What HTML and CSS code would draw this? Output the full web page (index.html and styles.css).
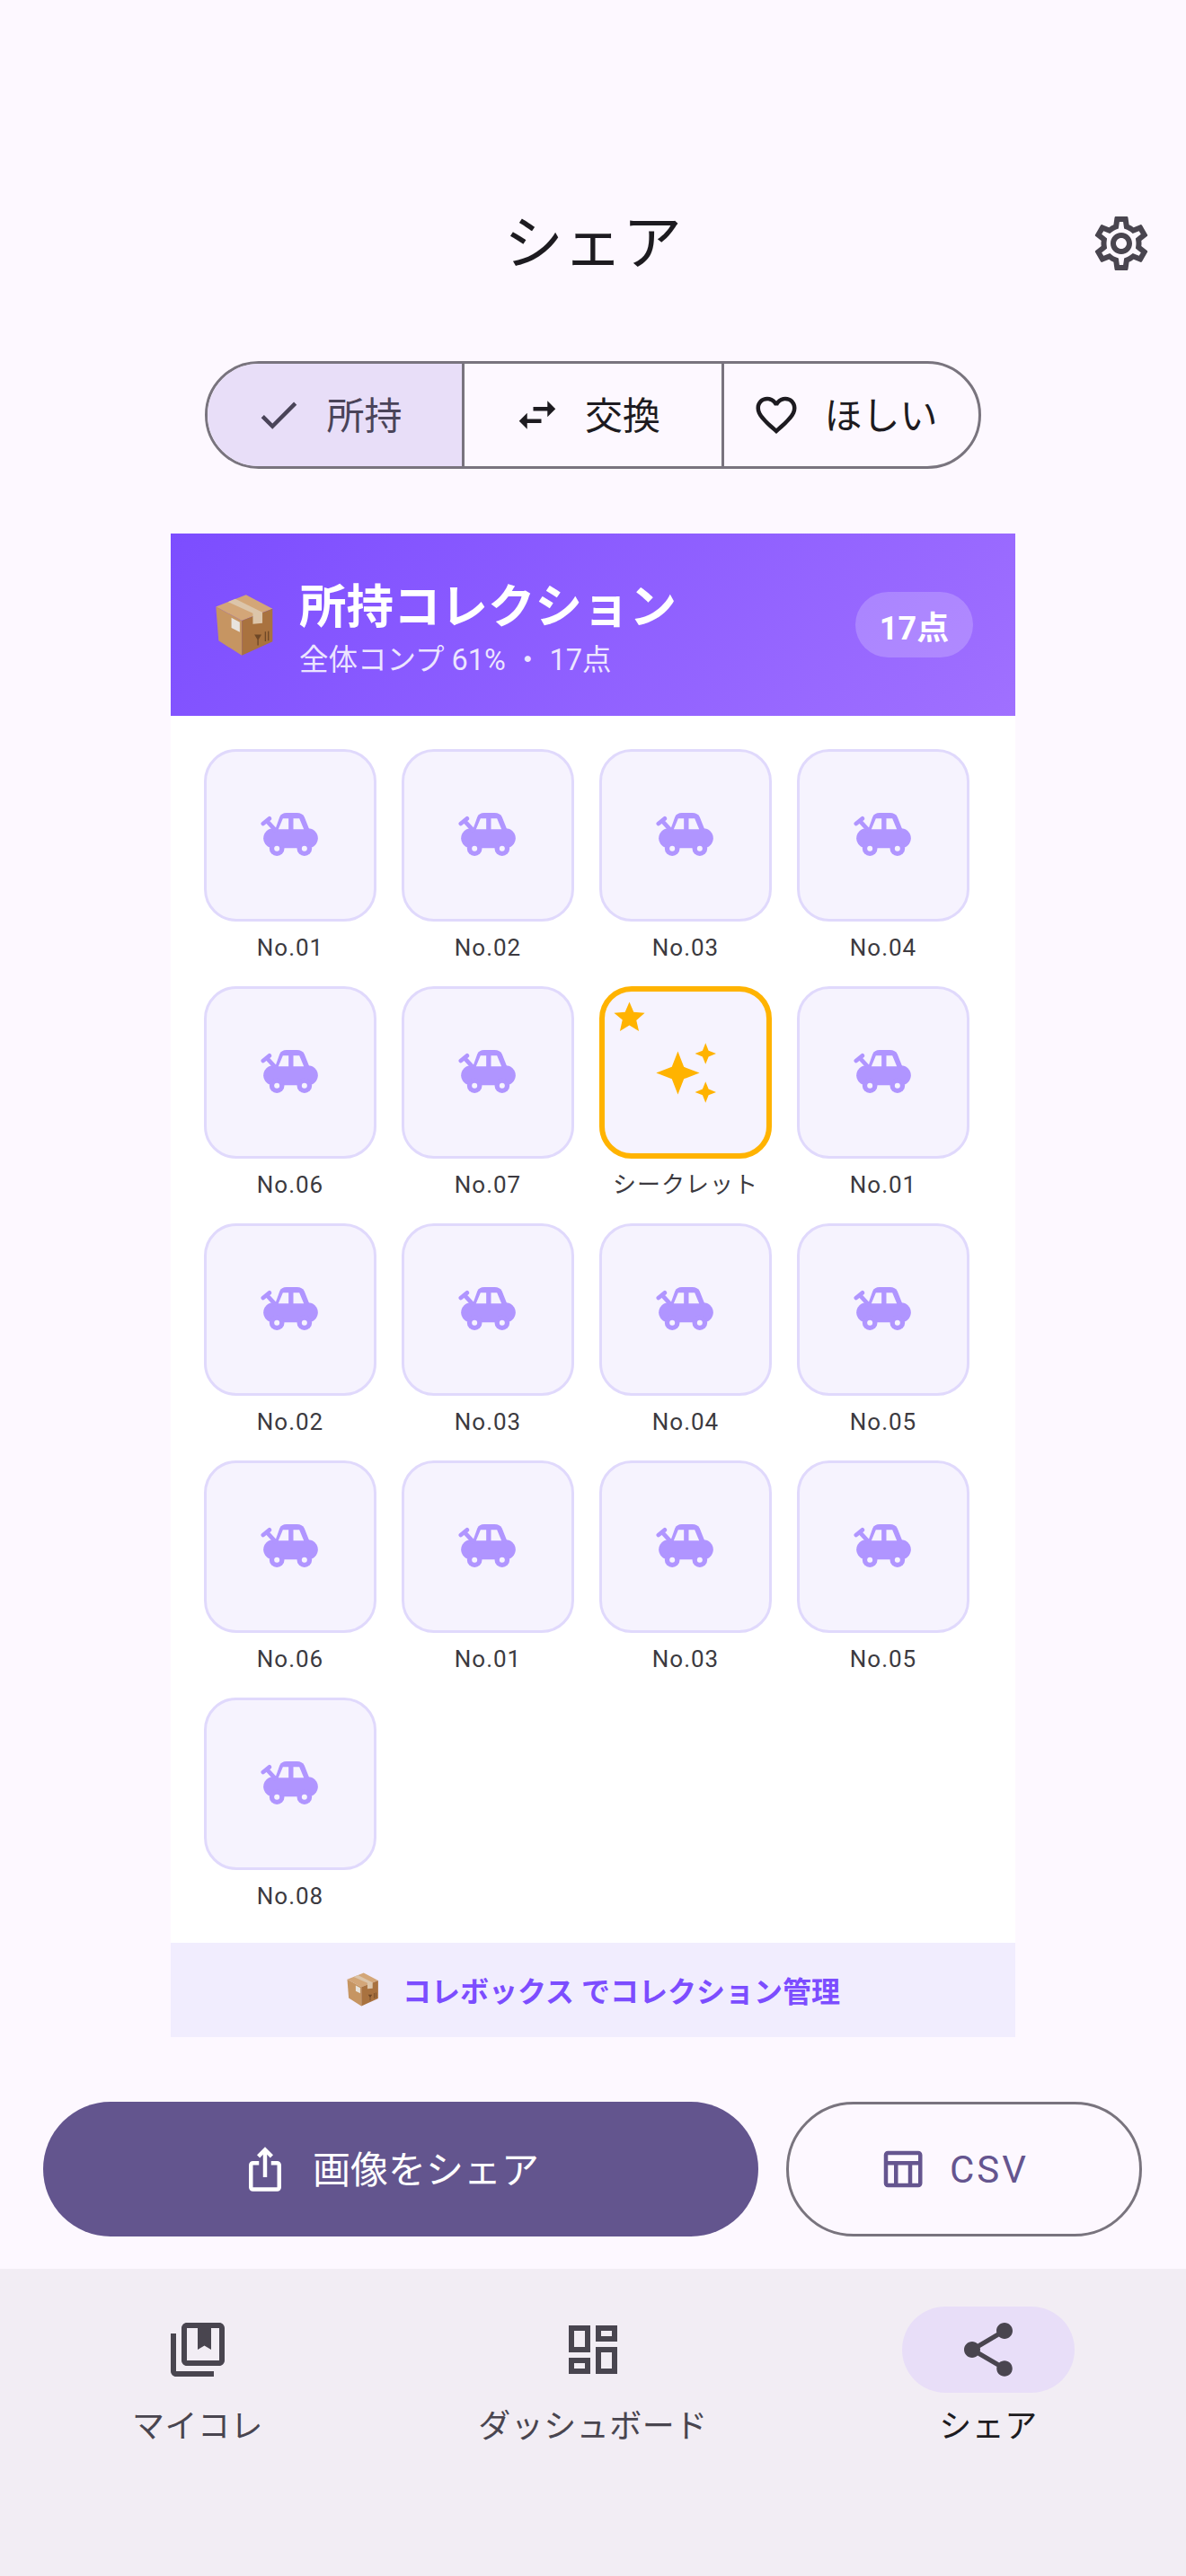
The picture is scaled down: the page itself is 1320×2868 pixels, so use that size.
FILE: index.html
```html
<!DOCTYPE html>
<html lang="ja">
<head>
    <meta charset="UTF-8">
    <meta name="viewport" content="width=device-width, initial-scale=1.0">
    <title>シェア</title>
    <link rel="stylesheet" href="styles.css">
</head>
<body>
  <svg class="defs" width="0" height="0">
    <symbol id="car" viewBox="59 78 200 150">
      <path fill="currentColor" d="M105 140L122 92Q128 78 145 78H180Q198 78 205 92L224 140Z"/>
      <rect fill="currentColor" x="68" y="130" width="182" height="66" rx="33"/>
      <circle fill="currentColor" cx="113" cy="197" r="25"/>
      <circle fill="currentColor" cx="205" cy="197" r="25"/>
      <path fill="none" stroke="currentColor" stroke-width="14" stroke-linecap="round" d="M67 114L88 97M84 110L108 136"/>
      <path fill="#f6f3fe" d="M118 133l15-36h19v36zM168 97h20l15 36h-35z"/>
      <circle fill="#f6f3fe" cx="113" cy="197" r="9"/>
      <circle fill="#f6f3fe" cx="205" cy="197" r="9"/>
    </symbol>
    <symbol id="box" viewBox="147 215 196 210">
      <path fill="#d3a678" d="M151 258l101-40 89 47-103 40z"/>
      <path fill="#c69562" d="M151 258l87 47v117l-78-50z"/>
      <path fill="#a9723f" d="M238 305l103-40v110l-103 47z"/>
      <path fill="#dcc5aa" d="M191 242l25-10 91 45v36l-32 3v-36z"/>
      <path fill="#e8e4de" d="M203 295l28 15v33l-28-14z"/>
      <path fill="#6e4726" d="M280 352h24l-10 16v20h-4v-20zM315 342h4v32h-4zM325 340h4v32h-4z"/>
    </symbol>
  </svg>

  <div class="appbar">
    <span></span>
    <h1>シェア</h1>
    <svg class="gear" viewBox="0 0 24 24"><path fill="currentColor" d="M19.43 12.98c.04-.32.07-.64.07-.98 0-.34-.03-.66-.07-.98l2.11-1.65c.19-.15.24-.42.12-.64l-2-3.46c-.09-.16-.26-.25-.44-.25-.06 0-.12.01-.17.03l-2.49 1c-.52-.4-1.08-.73-1.69-.98l-.38-2.65C14.46 2.18 14.25 2 14 2h-4c-.25 0-.46.18-.49.42l-.38 2.65c-.61.25-1.17.59-1.69.98l-2.49-1c-.06-.02-.12-.03-.18-.03-.17 0-.34.09-.43.25l-2 3.46c-.13.22-.07.49.12.64l2.11 1.65c-.04.32-.07.65-.07.98 0 .33.03.66.07.98l-2.11 1.65c-.19.15-.24.42-.12.64l2 3.46c.09.16.26.25.44.25.06 0 .12-.01.17-.03l2.49-1c.52.4 1.08.73 1.69.98l.38 2.65c.03.24.24.42.49.42h4c.25 0 .46-.18.49-.42l.38-2.65c.61-.25 1.17-.59 1.69-.98l2.49 1c.06.02.12.03.18.03.17 0 .34-.09.43-.25l2-3.46c.12-.22.07-.49-.12-.64l-2.11-1.65zm-1.98-1.71c.04.31.05.52.05.73 0 .21-.02.43-.05.73l-.14 1.13.89.7 1.08.84-.7 1.21-1.27-.51-1.04-.42-.9.68c-.43.32-.84.56-1.25.73l-1.06.43-.16 1.13-.2 1.35h-1.4l-.19-1.35-.16-1.13-1.06-.43c-.43-.18-.83-.41-1.23-.71l-.91-.7-1.06.43-1.27.51-.7-1.21 1.08-.84.89-.7-.14-1.13c-.03-.31-.05-.54-.05-.74s.02-.43.05-.73l.14-1.13-.89-.7-1.08-.84.7-1.21 1.27.51 1.04.42.9-.68c.43-.32.84-.56 1.25-.73l1.06-.43.16-1.13.2-1.35h1.39l.19 1.35.16 1.13 1.06.43c.43.18.83.41 1.23.71l.91.7 1.06-.43 1.27-.51.7 1.21-1.07.85-.89.7.14 1.13zM12 8c-2.21 0-4 1.79-4 4s1.79 4 4 4 4-1.79 4-4-1.79-4-4-4zm0 6c-1.1 0-2-.9-2-2s.9-2 2-2 2 .9 2 2-.9 2-2 2z"/></svg>
  </div>

  <div class="segments">
    <div class="segment selected">
      <svg class="icon" viewBox="0 0 24 24"><path fill="currentColor" d="M9 16.17L4.83 12l-1.41 1.41L9 19 21 7l-1.41-1.41z"/></svg>
      <span>所持</span>
    </div>
    <div class="segment">
      <svg class="icon" viewBox="0 0 24 24"><path fill="currentColor" d="M6.99 11L3 15l3.99 4v-3H14v-2H6.99v-3zM21 9l-3.99-4v3H10v2h7.01v3L21 9z"/></svg>
      <span>交換</span>
    </div>
    <div class="segment">
      <svg class="icon" viewBox="0 0 24 24"><path fill="currentColor" d="M16.5 3c-1.74 0-3.41.81-4.5 2.09C10.91 3.81 9.24 3 7.5 3 4.42 3 2 5.42 2 8.5c0 3.78 3.4 6.86 8.55 11.54L12 21.35l1.45-1.32C18.6 15.36 22 12.28 22 8.5 22 5.42 19.58 3 16.5 3zm-4.4 15.55l-.1.1-.1-.1C7.14 14.24 4 11.39 4 8.5 4 6.5 5.5 5 7.5 5c1.54 0 3.04.99 3.57 2.36h1.87C13.46 5.99 14.96 5 16.5 5c2 0 3.5 1.5 3.5 3.5 0 2.89-3.14 5.74-7.9 10.05z"/></svg>
      <span>ほしい</span>
    </div>
  </div>

  <div class="card">
    <div class="card-head">
      <svg class="box-big"><use href="#box"/></svg>
      <div class="card-titles">
        <div class="card-title">所持コレクション</div>
        <div class="card-sub">全体コンプ 61% ・ 17点</div>
      </div>
      <div class="badge">17点</div>
    </div>

    <div class="grid">
      <div class="cell"><div class="tile"><svg class="car"><use href="#car"/></svg></div><div class="label">No.01</div></div>
      <div class="cell"><div class="tile"><svg class="car"><use href="#car"/></svg></div><div class="label">No.02</div></div>
      <div class="cell"><div class="tile"><svg class="car"><use href="#car"/></svg></div><div class="label">No.03</div></div>
      <div class="cell"><div class="tile"><svg class="car"><use href="#car"/></svg></div><div class="label">No.04</div></div>

      <div class="cell"><div class="tile"><svg class="car"><use href="#car"/></svg></div><div class="label">No.06</div></div>
      <div class="cell"><div class="tile"><svg class="car"><use href="#car"/></svg></div><div class="label">No.07</div></div>
      <div class="cell">
        <div class="tile secret">
          <svg class="corner-star" viewBox="0 0 24 24"><path fill="currentColor" d="M12 17.27L18.18 21l-1.64-6.96L22 9.24l-7.19-.61L12 2 9.19 8.63 2 9.24l5.46 4.58L5.82 21z"/></svg>
          <svg class="sparkle" viewBox="265 243 200 200"><path fill="currentColor" d="M338 271l20 52 52 20-52 20-20 52-20-52-52-20 52-20zM430 244l10 25 25 10-25 10-10 25-10-25-25-10 25-10zM430 372l10 25 25 10-25 10-10 25-10-25-25-10 25-10z"/></svg>
        </div>
        <div class="label">シークレット</div>
      </div>
      <div class="cell"><div class="tile"><svg class="car"><use href="#car"/></svg></div><div class="label">No.01</div></div>

      <div class="cell"><div class="tile"><svg class="car"><use href="#car"/></svg></div><div class="label">No.02</div></div>
      <div class="cell"><div class="tile"><svg class="car"><use href="#car"/></svg></div><div class="label">No.03</div></div>
      <div class="cell"><div class="tile"><svg class="car"><use href="#car"/></svg></div><div class="label">No.04</div></div>
      <div class="cell"><div class="tile"><svg class="car"><use href="#car"/></svg></div><div class="label">No.05</div></div>

      <div class="cell"><div class="tile"><svg class="car"><use href="#car"/></svg></div><div class="label">No.06</div></div>
      <div class="cell"><div class="tile"><svg class="car"><use href="#car"/></svg></div><div class="label">No.01</div></div>
      <div class="cell"><div class="tile"><svg class="car"><use href="#car"/></svg></div><div class="label">No.03</div></div>
      <div class="cell"><div class="tile"><svg class="car"><use href="#car"/></svg></div><div class="label">No.05</div></div>

      <div class="cell"><div class="tile"><svg class="car"><use href="#car"/></svg></div><div class="label">No.08</div></div>
    </div>

    <div class="card-foot">
      <svg class="box-small"><use href="#box"/></svg>
      <span>コレボックス でコレクション管理</span>
    </div>
  </div>

  <div class="actions">
    <div class="btn btn-primary">
      <svg class="icon" viewBox="0 0 24 24"><path fill="currentColor" d="M16 5l-1.42 1.42-1.59-1.59V16h-1.98V4.83L9.42 6.42 8 5l4-4 4 4zm4 5v11c0 1.1-.9 2-2 2H6c-1.11 0-2-.9-2-2V10c0-1.11.89-2 2-2h3v2H6v11h12V10h-3V8h3c1.1 0 2 .89 2 2z"/></svg>
      <span>画像をシェア</span>
    </div>
    <div class="btn btn-outline">
      <svg class="icon" viewBox="0 0 24 24"><path fill="currentColor" d="M20 3H5c-1.1 0-2 .9-2 2v14c0 1.1.9 2 2 2h15c1.1 0 2-.9 2-2V5c0-1.1-.9-2-2-2zm0 2v3H5V5h15zm-5 14h-5v-9h5v9zM5 10h3v9H5v-9zm12 9v-9h3v9h-3z"/></svg>
      <span>CSV</span>
    </div>
  </div>

  <nav class="nav">
    <div class="nav-item">
      <div class="indicator">
        <svg class="nav-icon" viewBox="0 0 24 24"><path fill="currentColor" d="M4 6H2v14c0 1.1.9 2 2 2h14v-2H4V6zM20 2H8c-1.1 0-2 .9-2 2v12c0 1.1.9 2 2 2h12c1.1 0 2-.9 2-2V4c0-1.1-.9-2-2-2zm0 14H8V4h4v8l2.5-1.5L17 12V4h3v12z"/></svg>
      </div>
      <span>マイコレ</span>
    </div>
    <div class="nav-item">
      <div class="indicator">
        <svg class="nav-icon" viewBox="0 0 24 24"><path fill="currentColor" d="M19 5v2h-4V5h4M9 5v6H5V5h4m10 8v6h-4v-6h4M9 17v2H5v-2h4M21 3h-8v6h8V3zM11 3H3v10h8V3zm10 8h-8v10h8V11zm-10 4H3v6h8v-6z"/></svg>
      </div>
      <span>ダッシュボード</span>
    </div>
    <div class="nav-item active">
      <div class="indicator">
        <svg class="nav-icon" viewBox="0 0 24 24"><path fill="currentColor" d="M18 16.08c-.76 0-1.44.3-1.96.77L8.91 12.7c.05-.23.09-.46.09-.7s-.04-.47-.09-.7l7.05-4.11c.54.5 1.25.81 2.04.81 1.66 0 3-1.34 3-3s-1.34-3-3-3-3 1.34-3 3c0 .24.04.47.09.7L8.04 9.81C7.5 9.31 6.79 9 6 9c-1.66 0-3 1.34-3 3s1.34 3 3 3c.79 0 1.5-.31 2.04-.81l7.12 4.16c-.05.21-.08.43-.08.65 0 1.61 1.31 2.92 2.92 2.92 1.61 0 2.92-1.31 2.92-2.92s-1.31-2.92-2.92-2.92z"/></svg>
      </div>
      <span>シェア</span>
    </div>
  </nav>
</body>
</html>
```

FILE: styles.css
```css
* {
    box-sizing: border-box;
}

html, body {
    margin: 0;
    height: 100%;
}

body {
    width: 1320px;
    height: 2868px;
    display: flex;
    flex-direction: column;
    background-color: #fdf8ff;
    color: #1d1b20;
    font-family: Roboto, "Noto Sans CJK JP", sans-serif;
    overflow: hidden;
}

.defs {
    position: absolute;
}

.appbar {
    display: grid;
    grid-template-columns: 1fr auto 1fr;
    align-items: center;
    height: 104px;
    margin-top: 218px;
    padding: 0 36px;
}

.appbar h1 {
    margin: 0;
    font-size: 66px;
    font-weight: 400;
    line-height: 104px;
    padding-top: 2px;
}

.gear {
    width: 72px;
    height: 72px;
    justify-self: end;
    color: #49454f;
}

.segments {
    display: grid;
    grid-template-columns: 286px 289px 1fr;
    width: 864px;
    height: 120px;
    margin: 80px auto 0;
    border: 3px solid #79747e;
    border-radius: 60px;
    overflow: hidden;
}

.segment {
    display: flex;
    align-items: center;
    justify-content: center;
    gap: 26px;
    padding-right: 14px;
    font-size: 42px;
    border-right: 3px solid #79747e;
}

.segment span {
    padding-bottom: 6px;
}

.segment:last-child {
    border-right: none;
}

.segment.selected {
    background-color: #e8def8;
    color: #4a4459;
}

.icon {
    width: 54px;
    height: 54px;
    flex-shrink: 0;
}

.card {
    width: 940px;
    margin: 72px auto 0;
    background-color: #fff;
}

.card-head {
    display: flex;
    align-items: center;
    height: 203px;
    padding: 0 47px 0 49px;
    background: linear-gradient(135deg, #7c4dff, #a070ff);
    color: #fff;
}

.box-big {
    width: 65px;
    height: 70px;
    margin-right: 29px;
}

.card-titles {
    flex: 1;
    margin-top: 10px;
}

.card-title {
    font-size: 52.5px;
    font-weight: 700;
    line-height: 62px;
}

.card-sub {
    font-size: 32.5px;
    line-height: 44px;
    margin-top: 6px;
    color: rgba(255, 255, 255, 0.85);
}

.badge {
    display: flex;
    align-items: center;
    justify-content: center;
    width: 131px;
    height: 73px;
    border-radius: 37px;
    background-color: rgba(255, 255, 255, 0.2);
    font-size: 36px;
    font-weight: 700;
}

.grid {
    display: grid;
    grid-template-columns: repeat(4, 192px);
    column-gap: 28px;
    row-gap: 25px;
    padding: 37px 37px 34px;
}

.cell {
    display: flex;
    flex-direction: column;
    align-items: center;
    gap: 11px;
}

.tile {
    position: relative;
    display: flex;
    align-items: center;
    justify-content: center;
    width: 192px;
    height: 192px;
    background-color: #f6f3fe;
    border: 3px solid #e0d9fc;
    border-radius: 36px;
}

.tile.secret {
    border: 6px solid #ffb300;
    color: #ffb300;
}

.car {
    width: 67px;
    height: 50px;
    color: #b095ff;
}

.sparkle {
    width: 67px;
    height: 67px;
}

.corner-star {
    position: absolute;
    top: 8px;
    left: 7px;
    width: 41px;
    height: 41px;
}

.label {
    font-size: 26px;
    letter-spacing: 1px;
    line-height: 36px;
    color: #3c3a40;
}

.card-foot {
    display: flex;
    align-items: center;
    justify-content: center;
    gap: 26px;
    height: 105px;
    padding-bottom: 2px;
    background-color: #f1edfe;
    color: #7c4dff;
    font-size: 32px;
    font-weight: 700;
}

.box-small {
    width: 37px;
    height: 38px;
}

.actions {
    display: flex;
    gap: 31px;
    margin-top: 72px;
    padding: 0 49px 0 48px;
}

.btn {
    display: flex;
    align-items: center;
    justify-content: center;
    gap: 26px;
    height: 150px;
    border-radius: 75px;
    font-size: 42px;
}

.btn-primary {
    flex: 1;
    padding-right: 24px;
    background-color: #63558e;
    color: #fff;
}

.btn-primary span {
    padding-bottom: 6px;
}

.btn-outline {
    width: 396px;
    padding-right: 24px;
    border: 3px solid #79747e;
    color: #65558f;
    letter-spacing: 3px;
}

.nav {
    flex: 1;
    display: grid;
    grid-template-columns: repeat(3, 440px);
    margin-top: 36px;
    padding-top: 42px;
    background-color: #f2edf4;
}

.nav-item {
    display: flex;
    flex-direction: column;
    align-items: center;
    gap: 14px;
    font-size: 36px;
    letter-spacing: 0.5px;
    line-height: 48px;
    color: #49454f;
}

.indicator {
    display: flex;
    align-items: center;
    justify-content: center;
    width: 192px;
    height: 96px;
    border-radius: 48px;
}

.nav-icon {
    width: 72px;
    height: 72px;
}

.nav-item.active {
    color: #1d1b20;
}

.nav-item.active .indicator {
    background-color: #e8def8;
    color: #49454f;
}
```
